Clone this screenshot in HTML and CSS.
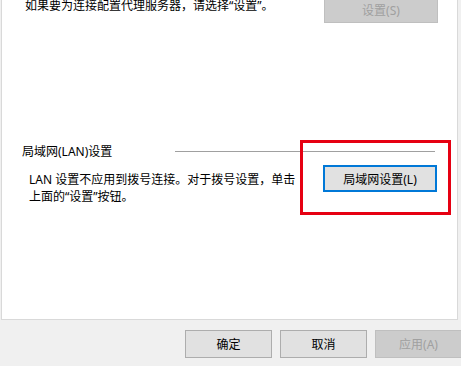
FILE: index.html
```html
<!DOCTYPE html>
<html lang="zh-CN">
<head>
<meta charset="UTF-8">
<meta name="viewport" content="width=device-width, initial-scale=1.0">
<title>Internet 属性 - 连接</title>
<link rel="stylesheet" href="styles.css">
</head>
<body>

<div class="panel">
  <div class="proxy-row">
    <p class="proxy-text">如果要为连接配置代理服务器，请选择“设置”。</p>
    <button class="btn btn-wide" disabled>设置(S)</button>
  </div>

  <div class="group-head">
    <span class="group-label">局域网(LAN)设置</span>
    <span class="group-line"></span>
  </div>

  <div class="lan-row">
    <p class="lan-text">LAN 设置不应用到拨号连接。对于拨号设置，单击<br>上面的“设置”按钮。</p>
    <button class="btn btn-wide btn-focus">局域网设置(L)</button>
  </div>
</div>

<div class="footer">
  <button class="btn">确定</button>
  <button class="btn">取消</button>
  <button class="btn" disabled>应用(A)</button>
</div>

<!-- red highlight around the LAN button -->
<div class="highlight"></div>

</body>
</html>
```

FILE: styles.css
```css
body {
  margin: 0;
  width: 461px;
  height: 366px;
  overflow: hidden;
  position: relative;
  background-color: #f0f0f0;
  color: #000;
  font-family: "Noto Sans", "Noto Sans CJK SC", sans-serif;
  font-size: 12px;
}

p {
  margin: 0;
}

.panel {
  box-sizing: border-box;
  width: 457px;
  height: 324px;
  margin-left: 1px;
  background: #fff;
  border: 1px solid #d9d9d9;
  border-top: none;
}

.proxy-row {
  display: flex;
  justify-content: space-between;
  align-items: flex-start;
  margin-top: -4px;
  padding: 0 19px 0 23px;
}

.proxy-text {
  line-height: 17px;
  margin-top: 1px;
}

.group-head {
  display: flex;
  align-items: center;
  margin-top: 121px;
  padding-left: 20px;
  height: 16px;
}

.group-label {
  width: 153px;
  line-height: 16px;
}

.group-line {
  width: 260px;
  height: 1px;
  margin-top: -2px;
  background: #a0a0a0;
}

.lan-row {
  display: flex;
  justify-content: space-between;
  align-items: flex-start;
  margin-top: 5px;
  padding: 0 20px 0 27px;
}

.lan-text {
  line-height: 17px;
  margin-top: 6px;
}

.btn {
  box-sizing: border-box;
  width: 87px;
  height: 28px;
  padding: 0;
  background: #e1e1e1;
  border: 1px solid #adadad;
  color: #000;
  font-family: inherit;
  font-size: 12px;
}

.btn:disabled {
  background: #cccccc;
  border-color: #bfbfbf;
  color: #a0a0a0;
}

.btn-wide {
  width: 114px;
  height: 27px;
}

.btn-focus {
  border: 2px solid #0078d7;
}

.footer {
  display: flex;
  justify-content: flex-end;
  gap: 8px;
  padding-top: 10px;
  margin-right: -1px;
}

.highlight {
  position: absolute;
  left: 300px;
  top: 140px;
  box-sizing: border-box;
  width: 151px;
  height: 75px;
  border: 3px solid #e60012;
}
```
